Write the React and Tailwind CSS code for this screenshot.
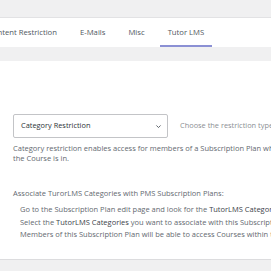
export default function App() {
  return (
    <div className="w-[271px] h-[271px] overflow-hidden bg-[#f0f0f1] font-['Open_Sans',sans-serif] text-[#50575e]">
      <div className="h-[17px]" />
      <div className="h-[30px] bg-white border-t border-[#e2e2e4] flex items-stretch whitespace-nowrap text-[7.7px] ml-[-20px]">
        <div className="px-[8px] flex items-center pt-[3px] border-b-2 border-transparent">Content Restriction</div>
        <div className="px-[8px] ml-[7px] flex items-center pt-[3px] border-b-2 border-transparent">E-Mails</div>
        <div className="px-[8px] ml-[7px] flex items-center pt-[3px] border-b-2 border-transparent">Misc</div>
        <div className="px-[8px] ml-[7px] flex items-center pt-[3px] border-b-2 border-[#8b90d4]">Tutor LMS</div>
      </div>
      <div className="h-[14px]" />
      <div className="bg-white h-[198px] pl-[13px] whitespace-nowrap">
        <div className="h-[53px]" />
        <div className="flex items-center">
          <div className="shrink-0 w-[155px] h-[24px] border border-[#c3c4c7] rounded-[2px] flex items-center justify-between pl-[7px] pr-[5px] text-[7.4px] text-[#2c3338]">
            <span>Category Restriction</span>
            <svg width="7" height="7" viewBox="0 0 10 10" fill="none" stroke="#50575e" strokeWidth="1.3">
              <path d="M2 3.5 L5 6.5 L8 3.5" />
            </svg>
          </div>
          <span className="ml-[12px] text-[7.4px] text-[#8c8f94]">Choose the restriction type</span>
        </div>
        <div className="mt-[6px] text-[7.5px] leading-[9.5px] text-[#646970]">
          <div>Category restriction enables access for members of a Subscription Plan which include the category</div>
          <div>the Course is in.</div>
        </div>
        <div className="mt-[25px] text-[7.5px] text-[#646970] leading-[10px]">Associate TurorLMS Categories with PMS Subscription Plans:</div>
        <div className="mt-[5px] pl-[7px] text-[7.5px] text-[#646970] leading-[12.5px]">
          <div>Go to the Subscription Plan edit page and look for the <span className="text-[#3c434a]">TutorLMS Categories</span> section.</div>
          <div>Select the <span className="text-[#3c434a]">TutorLMS Categories</span> you want to associate with this Subscription Plan.</div>
          <div>Members of this Subscription Plan will be able to access Courses within the selected categories.</div>
        </div>
      </div>
      <div className="border-t border-[#dcdcde]" />
    </div>
  );
}
